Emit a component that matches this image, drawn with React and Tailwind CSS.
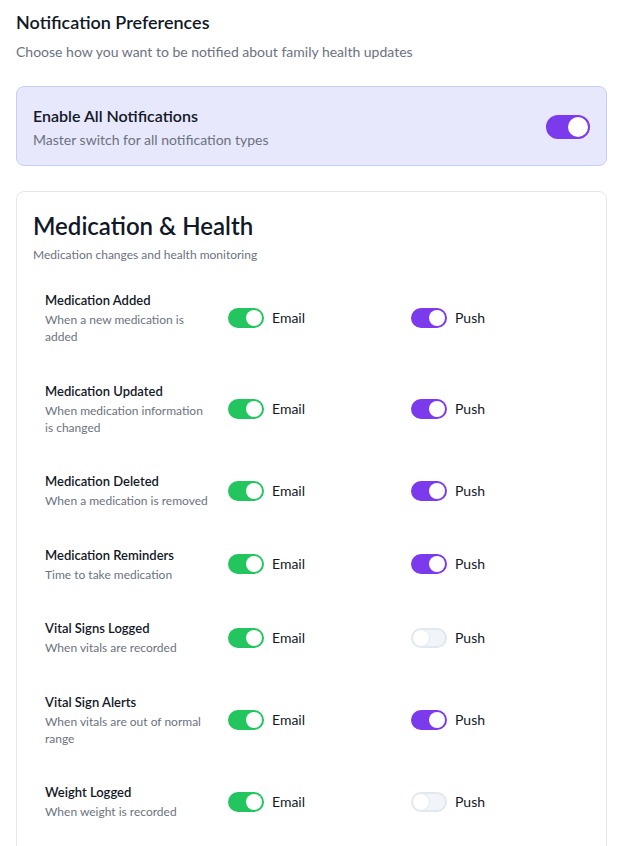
import React, { useState } from "react";

const rows = [
  { id: 1, title: "Medication Added", desc: "When a new medication is added", email: true, push: true },
  { id: 2, title: "Medication Updated", desc: "When medication information is changed", email: true, push: true },
  { id: 3, title: "Medication Deleted", desc: "When a medication is removed", email: true, push: true },
  { id: 4, title: "Medication Reminders", desc: "Time to take medication", email: true, push: true },
  { id: 5, title: "Vital Signs Logged", desc: "When vitals are recorded", email: true, push: false },
  { id: 6, title: "Vital Sign Alerts", desc: "When vitals are out of normal range", email: true, push: true },
  { id: 7, title: "Weight Logged", desc: "When weight is recorded", email: true, push: false },
];

const Toggle = ({ on, color = "purple", size = "sm" }) => {
  const big = size === "lg";
  const track = on
    ? color === "green"
      ? "bg-[#22c55e] border-[#22c55e]"
      : "bg-[#7c3aed] border-[#7c3aed]"
    : "bg-[#f1f5f9] border-[#e2e8f0]";
  return (
    <span
      className={`inline-flex shrink-0 items-center rounded-full border-2 ${track} ${
        big ? "w-11 h-6" : "w-9 h-5"
      } ${on ? "justify-end" : "justify-start"}`}
    >
      <span
        className={`block rounded-full bg-white ${big ? "w-5 h-5" : "w-4 h-4"} ${
          on ? "" : "shadow-[0_0_0_1px_#e2e8f0]"
        }`}
      />
    </span>
  );
};

const App = () => {
  const [all] = useState(true);

  return (
    <div className="min-h-screen bg-white px-4 pt-2 font-['Lato','Noto_Sans',sans-serif] text-[#111827]">
      {/* Header */}
      <h1 className="text-lg leading-7 font-semibold">Notification Preferences</h1>
      <p className="mt-1.5 text-sm leading-5 text-[#6b7280]">
        Choose how you want to be notified about family health updates
      </p>

      {/* Master switch */}
      <div className="mt-6 flex items-center justify-between rounded-lg border border-[#c7cdfa] bg-[#e7e8fb] px-4 pt-[17px] pb-[15px]">
        <div>
          <h2 className="text-base leading-6 font-semibold">Enable All Notifications</h2>
          <p className="mt-0.5 text-sm leading-5 text-[#6b7280]">
            Master switch for all notification types
          </p>
        </div>
        <Toggle on={all} size="lg" />
      </div>

      {/* Medication & Health */}
      <div className="mt-[25px] rounded-lg border border-[#e5e7eb] bg-white px-4 pt-[18px] pb-4">
        <h2 className="text-2xl leading-8 font-semibold">Medication &amp; Health</h2>
        <p className="mt-[5px] mb-[10px] text-xs leading-4 text-[#6b7280]">
          Medication changes and health monitoring
        </p>

        <div>
          {rows.map((row) => (
            <div key={row.id} className="grid grid-cols-3 items-center gap-4 px-3 py-[18.25px]">
              <div>
                <h3 className="text-[13px] leading-[18px] font-semibold">{row.title}</h3>
                <p className="mt-0.5 text-xs leading-[17px] text-[#6b7280]">{row.desc}</p>
              </div>
              <div className="flex items-center gap-2">
                <Toggle on={row.email} color="green" />
                <span className="text-sm">Email</span>
              </div>
              <div className="flex items-center gap-2">
                <Toggle on={row.push} />
                <span className="text-sm">Push</span>
              </div>
            </div>
          ))}
        </div>
      </div>
    </div>
  );
};

export default App;
